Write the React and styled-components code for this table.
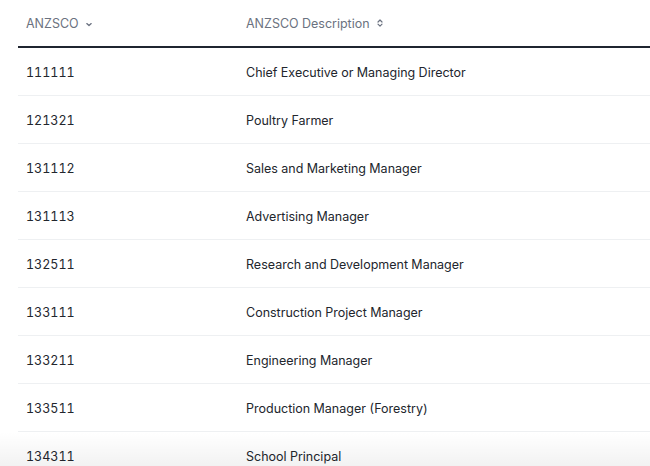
import React from 'react';
import styled, { createGlobalStyle } from 'styled-components';

const rows = [
    ['111111', 'Chief Executive or Managing Director'],
    ['121321', 'Poultry Farmer'],
    ['131112', 'Sales and Marketing Manager'],
    ['131113', 'Advertising Manager'],
    ['132511', 'Research and Development Manager'],
    ['133111', 'Construction Project Manager'],
    ['133211', 'Engineering Manager'],
    ['133511', 'Production Manager (Forestry)'],
    ['134311', 'School Principal'],
];

// sorted column: small down caret sitting low
const SortDown = () => (
    <svg width="8" height="10" viewBox="0 0 8 10">
        <path d="M1.8 5.6 L4 7.6 L6.2 5.6" fill="none" stroke="#6b7280" strokeWidth="1.3" strokeLinecap="round" strokeLinejoin="round" />
    </svg>
);

const SortBoth = () => (
    <svg width="8" height="10" viewBox="0 0 8 10">
        <path d="M2 4 L4 2 L6 4" fill="none" stroke="#6b7280" strokeWidth="1.2" strokeLinecap="round" strokeLinejoin="round" />
        <path d="M2 6.2 L4 8.2 L6 6.2" fill="none" stroke="#6b7280" strokeWidth="1.2" strokeLinecap="round" strokeLinejoin="round" />
    </svg>
);

const App = () => {
    return (
        <>
            <GlobalStyle />
            <Page>
                <Table>
                    <HeadRow>
                        <HeadCell>ANZSCO <SortDown /></HeadCell>
                        <HeadCell>ANZSCO Description <SortBoth /></HeadCell>
                    </HeadRow>
                    {rows.map(([code, desc]) => (
                        <Row key={code}>
                            <Cell>{code}</Cell>
                            <Cell>{desc}</Cell>
                        </Row>
                    ))}
                </Table>
                <Fade />
            </Page>
        </>
    );
};

export default App;

const GlobalStyle = createGlobalStyle`
  body {
    margin: 0;
    background: #fff;
    font-family: Inter, "Noto Sans", sans-serif;
    font-feature-settings: "tnum";
    overflow: hidden;
  }
`;

const Page = styled.div`
  position: relative;
  height: 466px;
  overflow: hidden;
  padding-left: 18px;
`;

const Table = styled.div`
  display: flex;
  flex-direction: column;
`;

const HeadRow = styled.div`
  display: grid;
  grid-template-columns: 220px 1fr;
  height: 46px;
  border-bottom: 2px solid #1f2530;
`;

const HeadCell = styled.div`
  display: flex;
  align-items: center;
  gap: 6px;
  padding-left: 8px;
  font-size: 12.5px;
  color: #6b7280;
`;

const Row = styled.div`
  display: grid;
  grid-template-columns: 220px 1fr;
  height: 47px;
  border-bottom: 1px solid #eef0f2;
`;

const Cell = styled.div`
  display: flex;
  align-items: center;
  padding-left: 8px;
  padding-top: 1px;
  font-size: 12.5px;
  color: #22262d;
`;

// bottom fade over the last row
const Fade = styled.div`
  position: absolute;
  left: 0;
  right: 0;
  bottom: 0;
  height: 34px;
  background: linear-gradient(to bottom, rgba(0, 0, 0, 0), rgba(0, 0, 0, 0.05));
  pointer-events: none;
`;
